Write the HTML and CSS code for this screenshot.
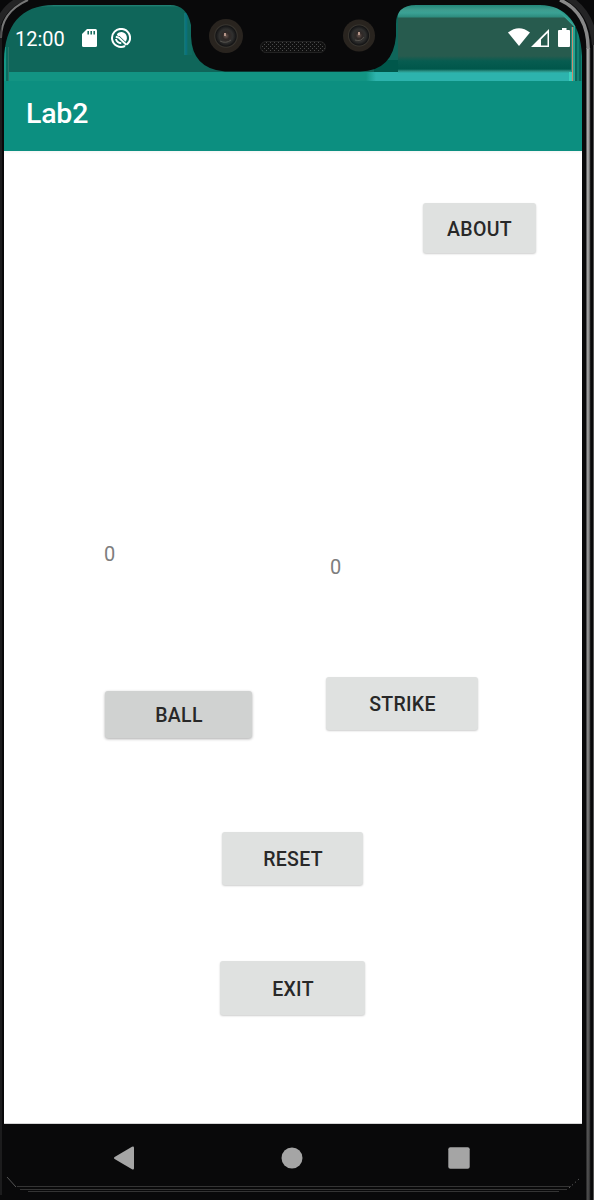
FILE: index.html
```html
<!DOCTYPE html>
<html lang="en">
<head>
<meta charset="utf-8">
<title>Lab2</title>
<link rel="stylesheet" href="styles.css">
</head>
<body>
<div class="phone">
  <header class="status">
    <span class="clock">12:00</span>
    <svg class="sd" width="15" height="18" viewBox="0 0 15 18"><path fill="#fff" d="M5 0H13.5Q15 0 15 1.5V16.5Q15 18 13.5 18H1.5Q0 18 0 16.500V5Z"/><path stroke="#0f665a" stroke-width="1.5" d="M6.200 2V5.500M9.200 2V5.500M12.200 2V5.500"/></svg>
    <svg class="debug" width="20" height="20" viewBox="0 0 20 20"><path fill="none" stroke="#fff" stroke-width="2" d="M14 18A9 9 0 1 1 18.200 13.700L15.800 16.600"/><path fill="#fff" d="M5.800 6.200C8.500 3 13 3.500 15 6.500C16.500 9 16 12 14.500 13.800L8.500 8L7 8.300Z"/><path fill="none" stroke="#fff" stroke-width="1.900" d="M4.800 8.800L7.800 9.500L15.500 17M4.900 11Q6 14.800 10.300 15.200"/></svg>
    <span class="spacer"></span>
    <svg class="wifi" width="22" height="18" viewBox="0 0 22 18"><path fill="#fff" d="M0 4.500Q11-4 22 4.500L11 18Z"/></svg>
    <svg class="signal" width="18" height="18" viewBox="0 0 18 18"><path fill="#fff" fill-rule="evenodd" d="M18 0V18H0ZM16.500 4L10 10.500V16.500H16.500Z"/></svg>
    <svg class="battery" width="12" height="19" viewBox="0 0 12 19"><path fill="#fff" d="M4 0H8.500V2H11Q12 2 12 3V18Q12 19 11 19H1Q0 19 0 18V3Q0 2 1 2H4Z"/></svg>
  </header>
  <div class="appbar"><h1>Lab2</h1></div>
  <main class="content">
    <button class="btn about">ABOUT</button>
    <div class="scores"><span class="ball-score">0</span><span class="strike-score">0</span></div>
    <div class="counts"><button class="btn ball">BALL</button><button class="btn strike">STRIKE</button></div>
    <button class="btn reset">RESET</button>
    <button class="btn exit">EXIT</button>
  </main>
  <nav class="nav">
    <svg width="20" height="24" viewBox="0 0 20 24"><path fill="#a5a5a5" d="M.6 10.900L18 .7Q20 0 20 1.800V22.200Q20 24 18 23.200L.6 13Q-.6 12 .6 10.900Z"/></svg>
    <svg width="22" height="22" viewBox="0 0 22 22"><circle cx="11" cy="11" r="10.500" fill="#a5a5a5"/></svg>
    <svg width="22" height="22" viewBox="0 0 22 22"><rect x=".3" y=".3" width="21.400" height="21.400" rx="2" fill="#a5a5a5"/></svg>
  </nav>
  <svg class="frame" width="594" height="1200" viewBox="0 0 594 1200">
    <defs>
      <linearGradient id="rail"><stop offset="0" stop-color="#333"/><stop offset=".3" stop-color="#aaa"/><stop offset=".65" stop-color="#999"/><stop offset="1" stop-color="#303030"/></linearGradient>
      <linearGradient id="railFade" x2="0" y2="1"><stop offset="0" stop-color="#09090a" stop-opacity="0"/><stop offset=".5" stop-color="#09090a" stop-opacity=".15"/><stop offset="1" stop-color="#09090a" stop-opacity=".6"/></linearGradient>
      <radialGradient id="lens"><stop offset="0" stop-color="#6b5851"/><stop offset=".2" stop-color="#302927"/><stop offset=".4" stop-color="#30302f"/><stop offset=".6" stop-color="#151516"/><stop offset=".66" stop-color="#38352f"/><stop offset=".72" stop-color="#29241f"/><stop offset="1" stop-color="#29241f"/></radialGradient>
      <pattern id="mesh" width="4" height="4" patternUnits="userSpaceOnUse"><rect width="4" height="4" fill="#101010"/><path fill="#4a4a4a" d="M0 0h1v1H0zM2 2h1v1H2z"/></pattern>
    </defs>
    <path fill="#09090a" fill-rule="evenodd" d="M0 0H594V1200H0ZM4 1123.500H582V56C581 24 566 5 540 5H416Q396 5 396 24V36Q393 71 360 71.500H225Q192 69 191 36V25Q187 5 170 5H54C20 5 5 26 4 60Z"/>
    <path fill="none" stroke="#242425" stroke-width="6" d="M-2 24Q5 5 24-2M568-2Q592 12 595 45"/>
    <path fill="none" stroke="#777" stroke-width="2" d="M1 38C1 18 12 7 28 0"/>
    <path fill="none" stroke="#303031" d="M1 25V1195"/>
    <path fill="url(#rail)" d="M586 48H590.500V1200H586Z"/>
    <path fill="none" stroke="#888" stroke-width="3.500" d="M560 0C578 8 588 23 588.200 49"/>
    <rect x="585" y="100" width="6" height="1100" fill="url(#railFade)"/>
    <path stroke="#555" d="M593.500 45V1200"/>
    <circle cx="226" cy="36" r="17" fill="url(#lens)"/>
    <circle cx="359" cy="35.500" r="16" fill="url(#lens)"/>
    <path fill="#b59689" d="M224 33h2v3h-2zM358 32h2v3h-2z"/>
    <path fill="none" stroke="#55524d" d="M220 41Q226 44 231 40M355 40Q361 42 364 37"/>
    <rect x="260.500" y="41.500" width="65" height="11" rx="5.500" fill="url(#mesh)" stroke="#222"/>
    <path fill="none" stroke="#343434" d="M17 1186.500H571M20 1189.500H567M28 1191.500H559"/>
    <path fill="none" stroke="#555" d="M7 1177L16 1187"/>
    <path fill="none" stroke="#777" stroke-dasharray="1 3" d="M569 1188L579 1179"/>
    <path stroke="#d5d5d5" d="M4 1123.500H582"/>
  </svg>
</div>
</body>
</html>
```
FILE: styles.css
```css
* { box-sizing: border-box; }
body { margin: 0; background: #09090a; font-family: Roboto, sans-serif; }
.phone { position: relative; width: 594px; height: 1200px; padding: 5px 12px 0 4px; overflow: hidden; }
.status {
  height: 76px; display: flex; align-items: flex-start; padding: 0 7px 0 11px; color: #fff;
  background:
    linear-gradient(#3ad0bd, #3ad0bd) 565px 67px / 3px 9px no-repeat,
    linear-gradient(90deg, #1d9282 0 1px, #c98d73 1px 2px, #26a391 2px 4px, #08665b 4px 6px, #138072 6px 8px, #08665b 8px 10px, #108071 10px) 567px 22px / 13px 54px no-repeat,
    linear-gradient(45deg, transparent 46%, #38a394 48%, #158a7b 60%, #0b7165 75%) 550px 0 / 28px 28px no-repeat,
    linear-gradient(#238679 0, #3e9d8f 5px, #3aa194 8px, #2d8b7d 12px, #275b4e 13px, #275b4e 51px, #075c50 56px, #00574b 64px, #298c80 66px, #2db3ad 68px) 394px 0 / 175px 76px no-repeat,
    linear-gradient(90deg, #129483, #2db3ad 10px) 362px 67px / 34px 9px no-repeat,
    linear-gradient(#00574b, #00574b) 370px 55px / 24px 12px no-repeat,
    linear-gradient(90deg, #18796a, #087284 2px, #106b60 4px) 180px 8px / 8px 42px no-repeat,
    linear-gradient(90deg, #159685 0 2px, #0b6b60 2px 4px, #2b7468 4px 5px, transparent 5px) 0 42px / 10px 34px no-repeat,
    linear-gradient(#25877a 0, #0f665a 2px, #0f665a 67px, #129483 67px);
}
.clock { font-size: 20px; line-height: 24px; margin-top: 21.500px; width: 67px; }
.sd { margin-top: 24px; }
.debug { margin: 23px 0 0 14px; }
.spacer { flex: 1; }
.wifi { margin-top: 23px; }
.signal { margin: 24px 0 0 1px; }
.battery { margin: 23px 5px 0 9px; }
.appbar { height: 70px; background: #0c8f80; padding: 16px 22px; }
h1 { margin: 0; color: #fff; font-size: 28.500px; line-height: 34px; font-weight: 500; letter-spacing: -.2px; }
.content { height: 972px; background: #fff; display: flex; flex-direction: column; align-items: flex-start; padding: 52px 46.500px 0 100px; background: linear-gradient(#f5f5f5, #fff 3px); }
.btn { border: 0; border-radius: 3px; padding: 3px 0 0 1px; background: #dfe1e0; color: #282828; font: 500 19.500px/24px Roboto, sans-serif; letter-spacing: .3px; box-shadow: 0 1px 2px #0003; flex: none; }
.about { align-self: flex-end; width: 113px; height: 50px; }
.scores { display: flex; margin-top: 289px; color: #7d7d7d; font-size: 20px; line-height: 24px; height: 37px; }
.ball-score { width: 226px; }
.strike-score { margin-top: 13px; }
.counts { display: flex; gap: 74px; margin: 98px 0 0 1px; height: 53px; }
.ball { width: 147px; height: 47px; margin-top: 14px; background: #d0d2d1; box-shadow: 0 1px 3px #0005; }
.strike { width: 152px; height: 53px; }
.reset { width: 141px; height: 53px; margin: 102px 0 0 118px; }
.exit { width: 145px; height: 54px; margin: 76px 0 0 116px; }
.nav { height: 77px; position: relative; z-index: 1; display: flex; align-items: flex-start; padding: 22.500px 112px 0 110px; justify-content: space-between; }
.nav svg:nth-child(2) { margin: 1px 0 0 2px; }
.nav svg:nth-child(3) { margin-top: 1px; }
.frame { position: absolute; left: 0; top: 0; pointer-events: none; }
```
